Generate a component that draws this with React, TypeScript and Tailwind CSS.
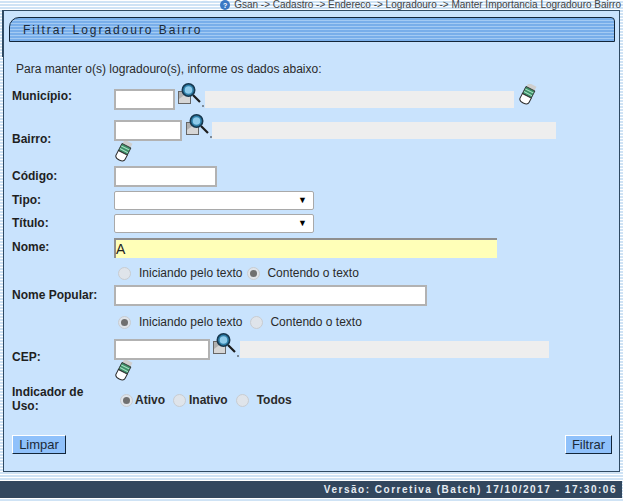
import React from 'react';

const Lupa = () => (
  <svg width="26" height="24" viewBox="0 0 26 24" className="shrink-0">
    <rect x="0.5" y="8.5" width="12" height="12" fill="#b0b0b0" stroke="#666" />
    <path d="M1 16l8-6h3v10H1z" fill="#d6d6d6" />
    <path d="M15 12l7 7" stroke="#1c1c1c" strokeWidth="2.2" />
    <circle cx="10.5" cy="7" r="6.2" fill="#2f7fa8" stroke="#17384f" strokeWidth="1.6" />
    <circle cx="10.5" cy="7" r="3.8" fill="#8fcbea" />
    <path d="M24 23h2" stroke="#333" />
  </svg>
);

const Borracha = () => (
  <svg width="19" height="21" viewBox="0 0 19 21" className="shrink-0">
    <g transform="rotate(27 9.5 10.5)">
      <rect x="5" y="-0.5" width="9" height="6" fill="#cfcfcf" />
      <rect x="4.5" y="4" width="10" height="8" fill="#3d9168" stroke="#2b2b2b" strokeWidth="0.8" />
      <path d="M5 6.5h9M5 9.5h9" stroke="#a6dfc3" strokeWidth="1.1" />
      <path d="M4.5 12h10v5c0 2-2 3-5 3s-5-1-5-3z" fill="#fff" stroke="#2b2b2b" />
    </g>
  </svg>
);

const Radio = ({ checked }: { checked?: boolean }) => (
  <span className="flex h-[13px] w-[13px] shrink-0 items-center justify-center rounded-full border border-[#c8ccd1] bg-[#dfe4ea]">
    {checked && <span className="h-[7px] w-[7px] rounded-full bg-[#707070]" />}
  </span>
);

const Campo = ({ className }: { className: string }) => (
  <div className={`border-2 border-[#b2b2b2] bg-white ${className}`} />
);

const Seletor = () => (
  <div className="flex h-[19px] w-[200px] items-center justify-end rounded-[2px] border border-[#a9a9a9] bg-white pr-[6px]">
    <span className="text-[9px] leading-none text-black">▼</span>
  </div>
);

const Rotulo = ({ children, className = 'pb-[2px]' }: { children: React.ReactNode; className?: string }) => (
  <label className={`w-[102px] shrink-0 text-[12px] font-bold leading-[14px] text-[#1f1f1f] ${className}`}>{children}</label>
);

const App = () => {
  return (
    <div className="flex h-[501px] w-[623px] flex-col overflow-hidden bg-[repeating-linear-gradient(180deg,#ffffff_0px,#ffffff_1px,#cfe3f5_1px,#cfe3f5_3px)] font-['Liberation_Sans',Arial,sans-serif] text-[#222]">
      <div className="flex h-[10px] items-center justify-end pr-[2px] text-[10px] leading-none text-[#444]">
        <span className="mr-[4px] flex h-[10px] w-[10px] items-center justify-center rounded-full bg-[#3b78c4] text-[7px] font-bold text-white">?</span>
        <span>Gsan -&gt; Cadastro -&gt; Endereco -&gt; Logradouro -&gt; Manter Importancia Logradouro Bairro</span>
      </div>

      <div className="relative ml-[3px] mr-[3px] h-[462px] border border-[#2f4a63] bg-[#c9e3fd] px-[5px] pt-[6px]">
        <div className="absolute -left-[2px] -top-[1px] h-[47px] w-[2px] bg-[#2f4a63]" />
        <div className="flex h-[25px] w-[606px] items-center rounded-tl-[10px] rounded-tr-[4px] border border-[#12263a] bg-[repeating-linear-gradient(180deg,#78aeea_0px,#78aeea_2px,#a3caf3_2px,#a3caf3_3px)] pl-[13px] text-[12px] tracking-[1.95px] text-[#1c2a38]">
          Filtrar Logradouro Bairro
        </div>

        <p className="mt-[20px] pl-[7px] text-[12px] leading-[14px] text-[#2a2a2a]">Para manter o(s) logradouro(s), informe os dados abaixo:</p>

        <div className="mt-[13px] flex flex-col pl-[3px]">
          <div className="flex h-[21px] items-center">
            <Rotulo className="pb-[8px]">Município:</Rotulo>
            <Campo className="h-[21px] w-[61px]" />
            <div className="ml-[3px] -mt-[6px] self-start"><Lupa /></div>
            <div className="ml-[1px] h-[17px] w-[309px] bg-[#eeeeee]" />
            <div className="ml-[4px] -mt-[5px] self-start"><Borracha /></div>
          </div>

          <div className="mt-[10px] flex">
            <div className="flex h-[41px] items-center pb-[4px]"><Rotulo className="">Bairro:</Rotulo></div>
            <div>
              <div className="flex h-[21px] items-center">
                <Campo className="h-[21px] w-[68px]" />
                <div className="ml-[4px] -mt-[6px] self-start"><Lupa /></div>
                <div className="h-[17px] w-[344px] bg-[#eeeeee]" />
              </div>
              <Borracha />
            </div>
          </div>

          <div className="mt-[4px] flex h-[21px] items-center">
            <Rotulo>Código:</Rotulo>
            <Campo className="h-[21px] w-[103px]" />
          </div>

          <div className="mt-[4px] flex h-[19px] items-center">
            <Rotulo>Tipo:</Rotulo>
            <Seletor />
          </div>

          <div className="mt-[4px] flex h-[19px] items-center">
            <Rotulo>Título:</Rotulo>
            <Seletor />
          </div>

          <div className="mt-[5px] flex h-[20px] items-center">
            <Rotulo>Nome:</Rotulo>
            <div className="flex h-[20px] w-[383px] items-center border-l-2 border-t-2 border-[#8f8f8f] bg-[#ffffb8] text-[14px] leading-none text-[#222]">A</div>
          </div>

          <div className="mt-[8px] flex h-[14px] items-center pl-[106px] text-[12px] text-[#2a2a2a]">
            <Radio />
            <span className="ml-[8px]">Iniciando pelo texto</span>
            <span className="ml-[5px]"><Radio checked /></span>
            <span className="ml-[7px]">Contendo o texto</span>
          </div>

          <div className="mt-[5px] flex h-[21px] items-center">
            <Rotulo>Nome Popular:</Rotulo>
            <Campo className="h-[21px] w-[313px]" />
          </div>

          <div className="mt-[9px] flex h-[14px] items-center pl-[106px] text-[12px] text-[#2a2a2a]">
            <Radio checked />
            <span className="ml-[8px]">Iniciando pelo texto</span>
            <span className="ml-[8px]"><Radio /></span>
            <span className="ml-[7px]">Contendo o texto</span>
          </div>

          <div className="mt-[10px] flex">
            <div className="flex h-[41px] items-center pb-[5px]"><Rotulo className="">CEP:</Rotulo></div>
            <div>
              <div className="flex h-[21px] items-center">
                <Campo className="h-[21px] w-[96px]" />
                <div className="ml-[3px] -mt-[6px] self-start"><Lupa /></div>
                <div className="ml-[1px] h-[17px] w-[309px] bg-[#eeeeee]" />
              </div>
              <Borracha />
            </div>
          </div>

          <div className="mt-[4px] flex h-[28px] items-center">
            <Rotulo className="">Indicador de<br />Uso:</Rotulo>
            <div className="ml-[6px] mt-[2px] flex items-center text-[12px] font-bold text-[#2a2a2a]">
              <Radio checked />
              <span className="ml-[2px]">Ativo</span>
              <span className="ml-[8px]"><Radio /></span>
              <span className="ml-[3px]">Inativo</span>
              <span className="ml-[8px]"><Radio /></span>
              <span className="ml-[8px]">Todos</span>
            </div>
          </div>

          <div className="mt-[22px] flex w-[600px] items-center justify-between">
            <button className="h-[19px] w-[54px] border border-[#12263a] border-l-white border-t-white bg-[#8fc1fb] text-[13px] leading-none text-[#1c2a38]">Limpar</button>
            <button className="h-[19px] w-[47px] border border-[#12263a] border-l-white border-t-white bg-[#8fc1fb] text-[13px] leading-none text-[#1c2a38]">Filtrar</button>
          </div>
        </div>
      </div>

      <div className="mt-[9px] flex h-[17px] w-[622px] items-center justify-end bg-[#32475e] pr-[5px] text-[10px] font-bold tracking-[1.52px] text-[#e6ecf2]">
        Versão: Corretiva (Batch) 17/10/2017 - 17:30:06
      </div>
    </div>
  );
};

export default App;
